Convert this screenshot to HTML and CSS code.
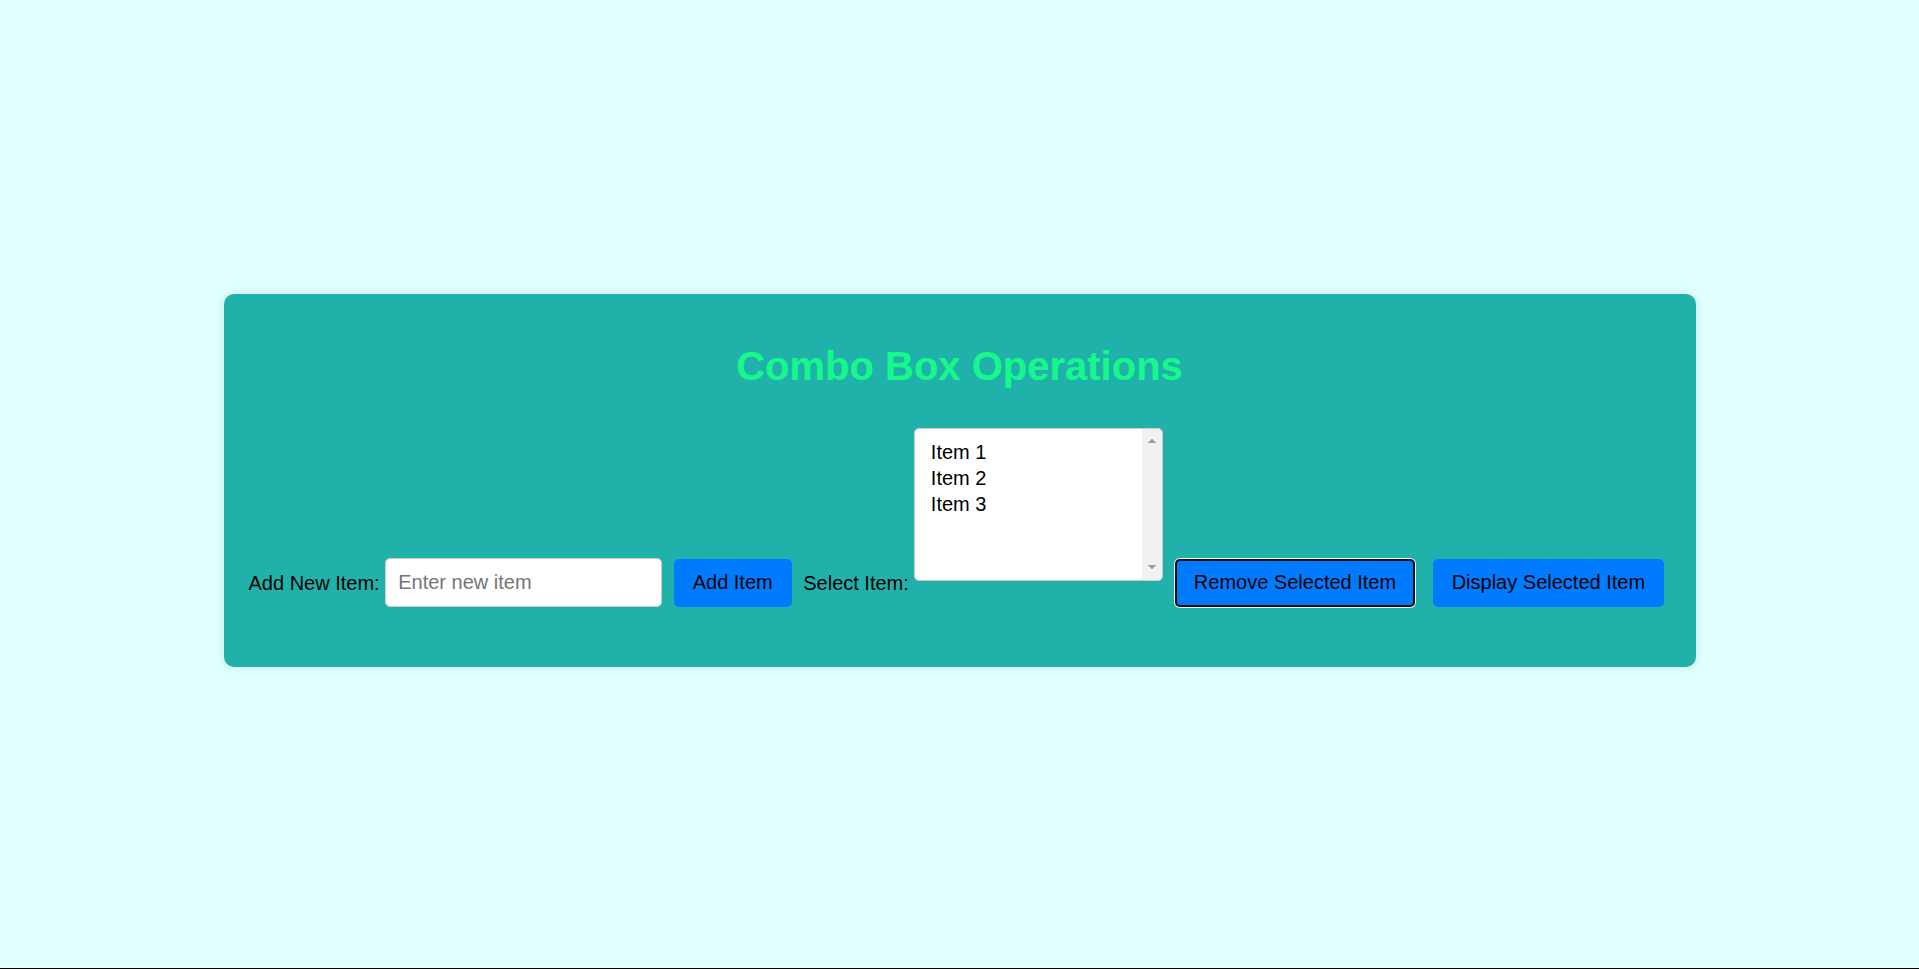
FILE: index.html
```html
<!DOCTYPE html>
<html lang="en">
<head>
<meta charset="utf-8">
<title>Combo Box Operations</title>
<link rel="stylesheet" href="styles.css">
</head>
<body>
  <div class="card">
    <h1 class="title">Combo Box Operations</h1>
    <div class="controls">
      <label class="field-label" for="newItem">Add New Item:</label>
      <input class="text-input" id="newItem" type="text" placeholder="Enter new item">
      <button class="btn">Add Item</button>
      <label class="field-label" for="combo">Select Item:</label>
      <select class="listbox" id="combo" size="5">
        <option>Item 1</option>
        <option>Item 2</option>
        <option>Item 3</option>
      </select>
      <button class="btn focused">Remove Selected Item</button>
      <button class="btn">Display Selected Item</button>
    </div>
  </div>
</body>
</html>
```
FILE: styles.css
```css
html {
  height: 100%;
}

body {
  margin: 0;
  min-height: 100vh;
  box-sizing: border-box;
  padding-bottom: 8px;
  border-bottom: 1px solid #000;
  background: #e0ffff;
  font-family: "Liberation Sans", Arial, sans-serif;
  display: flex;
  align-items: center;
  justify-content: center;
}

.card {
  width: 1472px;
  box-sizing: border-box;
  padding: 50px 25px 60px;
  background: #20b2aa;
  border-radius: 10px;
  box-shadow: 0 0 10px rgba(0, 0, 0, 0.1);
}

.title {
  margin: 0 0 39px;
  text-align: center;
  font-size: 40px;
  font-weight: bold;
  line-height: normal;
  color: #17f88a;
}

.controls {
  display: flex;
  align-items: flex-end;
  gap: 5.5px;
}

.field-label {
  font-size: 20px;
  line-height: 48px;
  color: #000;
  white-space: nowrap;
}

.text-input {
  width: 277px;
  height: 49px;
  box-sizing: border-box;
  margin: 0;
  padding: 0 12px;
  border: 1px solid #ccc;
  border-radius: 5px;
  background: #fff;
  font-family: inherit;
  font-size: 20px;
  color: #000;
  outline: none;
}

.text-input::placeholder {
  color: #757575;
}

.btn {
  height: 48px;
  margin: 0 6px;
  padding: 0 19px;
  border: none;
  border-radius: 5px;
  background: #007bff;
  color: #000;
  font-family: inherit;
  font-size: 20px;
  white-space: nowrap;
  cursor: pointer;
}

.btn.focused {
  box-shadow: inset 0 0 0 2px #101010, 0 0 0 1px #fff;
}

.listbox {
  width: 249px;
  height: 153px;
  box-sizing: border-box;
  margin: 0 0 26px;
  padding: 12px 32px 12px 12px;
  border: 1px solid #ccc;
  border-radius: 5px;
  font-family: inherit;
  font-size: 20px;
  color: #000;
  overflow-y: hidden;
  scrollbar-width: none;
  outline: none;
  /* scrollbar track with up / down arrows */
  background:
    conic-gradient(from 141.3deg at 50% 0, #a3a3a3 77.4deg, transparent 0) right 6px top 9px / 8px 5px no-repeat,
    conic-gradient(from 321.3deg at 50% 100%, #a3a3a3 77.4deg, transparent 0) right 6px bottom 10px / 8px 5px no-repeat,
    linear-gradient(#f1f1f1, #f1f1f1) right top / 20px 100% no-repeat,
    #fff;
}

.listbox option {
  padding: 0 2px 2px 3.5px;
  line-height: normal;
  color: #000;
}
```
